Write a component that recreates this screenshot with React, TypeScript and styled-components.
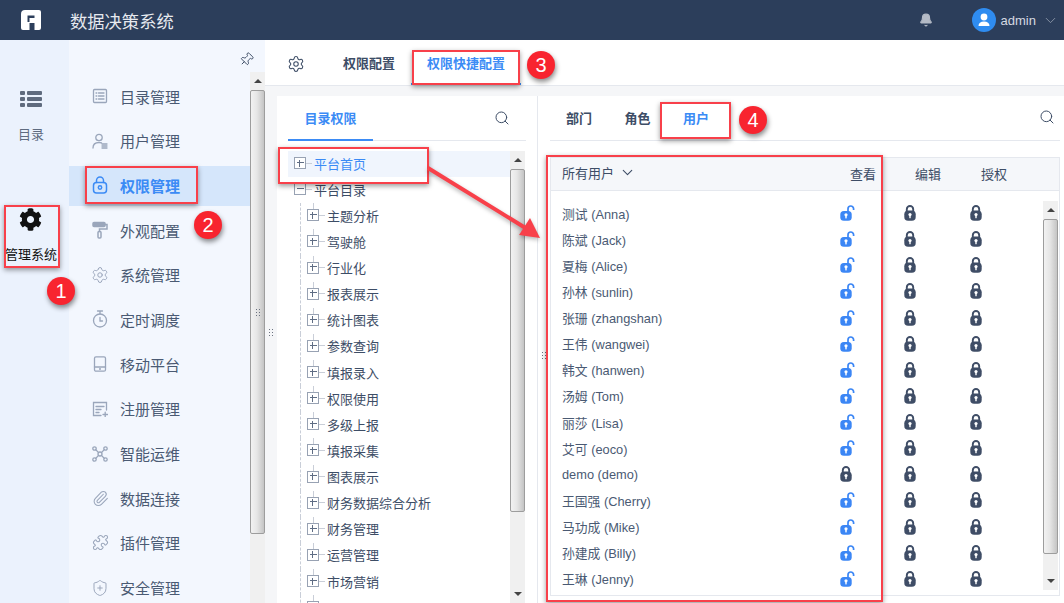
import styled, { createGlobalStyle } from 'styled-components';
import { Bell, ChevronDown, Paperclip, Pin, Puzzle, Search, Settings, ShieldPlus } from 'lucide-react';
import { FaCog } from 'react-icons/fa';
import type { ReactNode } from 'react';

const FONT = `"Liberation Sans", "Noto Sans CJK SC", sans-serif`;

const GlobalStyle = createGlobalStyle`
  html, body {
    margin: 0;
    padding: 0;
    height: 100%;
    overflow: hidden;
    background: #fff;
  }
  * {
    box-sizing: border-box;
  }
`;

const Page = styled.div`
  position: relative;
  width: 1064px;
  height: 603px;
  overflow: hidden;
  font-family: ${FONT};
  color: #3d4d66;
`;

/* ---------- top bar ---------- */

const Header = styled.header`
  height: 40px;
  display: flex;
  align-items: center;
  background: #2c3e5b;
  color: #e6e9ef;
`;

const LogoWrap = styled.div`
  width: 70px;
  padding-left: 21px;
  display: flex;
`;

const AppName = styled.div`
  flex: 1;
  font-size: 17.3px;
`;

const BellWrap = styled.div`
  display: flex;
  margin-right: 39px;
  color: #b4bac6;
`;

const Avatar = styled.div`
  width: 24px;
  height: 24px;
  border-radius: 50%;
  background: #2f8cf0;
  display: flex;
  align-items: center;
  justify-content: center;
  margin-right: 5px;
`;

const UserName = styled.span`
  font-size: 13px;
  color: #d5d9e1;
  margin-right: 6px;
`;

const UserMenu = styled.div`
  display: flex;
  align-items: center;
  padding-right: 5px;
  color: #8b96a8;
`;

/* ---------- shell ---------- */

const Body = styled.div`
  display: flex;
  height: 563px;
`;

const Rail = styled.nav`
  width: 69px;
  background: #ebf2fd;
  display: flex;
  flex-direction: column;
  align-items: center;
  padding: 50px 7px 0 0;
`;

const RailItem = styled.div<{ $active?: boolean }>`
  height: 118px;
  display: flex;
  flex-direction: column;
  align-items: center;
  gap: ${(p) => (p.$active ? '13px' : '16px')};
  font-size: 13px;
  white-space: nowrap;
  color: ${(p) => (p.$active ? '#111' : '#5e6b80')};
`;

const Nav = styled.nav`
  width: 196px;
  background: #f3f7fe;
  display: flex;
  flex-direction: column;
  flex-shrink: 0;
`;

const PinRow = styled.div`
  height: 32px;
  display: flex;
  justify-content: flex-end;
  align-items: center;
  padding: 6px 11px 0 0;
  color: #3d4d66;
`;

const NavBody = styled.div`
  flex: 1;
  display: flex;
  min-height: 0;
`;

const NavList = styled.div`
  width: 181px;
  padding-top: 5px;
  overflow: hidden;
`;

const NavRow = styled.div<{ $active?: boolean }>`
  height: 40px;
  margin-bottom: 4.7px;
  display: flex;
  align-items: center;
  gap: 12px;
  padding: 0 0 2px 23px;
  font-size: 15px;
  color: ${(p) => (p.$active ? '#3b8bf5' : '#4a5a73')};
  background: ${(p) => (p.$active ? '#d5e6fb' : 'transparent')};
  font-weight: ${(p) => (p.$active ? 700 : 400)};
`;

const NavIcon = styled.span<{ $active?: boolean }>`
  width: 16px;
  height: 18px;
  display: flex;
  align-items: center;
  justify-content: center;
  flex-shrink: 0;
  color: ${(p) => (p.$active ? '#3b8bf5' : '#9aa6bb')};
  svg {
    flex-shrink: 0;
  }
`;

const Track = styled.div`
  width: 15px;
  flex-shrink: 0;
  background: #f0f0f0;
  display: flex;
  flex-direction: column;
`;

const TrackArrow = styled.div<{ $down?: boolean }>`
  height: 18px;
  flex-shrink: 0;
  display: flex;
  align-items: center;
  justify-content: center;
  &::before {
    content: '';
    border-left: 4px solid transparent;
    border-right: 4px solid transparent;
    ${(p) =>
      p.$down ? 'border-top: 4px solid #444;' : 'border-bottom: 4px solid #444;'}
  }
`;

const Thumb = styled.div<{ $size: number }>`
  height: ${(p) => p.$size}px;
  flex-shrink: 0;
  background: linear-gradient(90deg, #f2f2f2 0%, #e6e6e6 45%, #c4c4c4 100%);
  border: 1px solid #9d9d9d;
  border-radius: 2px;
`;

const TrackSpacer = styled.div`
  flex: 1;
`;

const Main = styled.main`
  flex: 1;
  display: flex;
  flex-direction: column;
  min-width: 0;
`;

const TopTabs = styled.div`
  height: 46px;
  flex-shrink: 0;
  display: flex;
  align-items: center;
  padding: 2px 0 0 22px;
  border-bottom: 1px solid #e5e8ee;
`;

const TopTab = styled.div<{ $active?: boolean }>`
  height: 100%;
  display: flex;
  align-items: center;
  padding: 0 16px;
  margin-left: ${(p) => (p.$active ? '0' : '22px')};
  font-size: 13px;
  font-weight: 700;
  color: ${(p) => (p.$active ? '#3b8bf5' : '#3d4d66')};
  border-bottom: 2px solid ${(p) => (p.$active ? '#3b8bf5' : 'transparent')};
`;

const Workspace = styled.div`
  flex: 1;
  display: flex;
  background: #f5f6f8;
  padding: 10px 0 0 12px;
  min-height: 0;
`;

/* ---------- left tree ---------- */

const TreePanel = styled.section`
  width: 261px;
  background: #fff;
  border-right: 1px solid #e5e8ee;
  display: flex;
  flex-direction: column;
  padding: 0 11px;
  flex-shrink: 0;
`;

const PanelHead = styled.div`
  height: 45px;
  flex-shrink: 0;
  display: flex;
  align-items: center;
  justify-content: space-between;
  border-bottom: 1px solid #e5e8ee;
  padding-right: 16px;
  color: #3d4d66;
`;

const PanelTab = styled.div`
  width: 85px;
  height: 100%;
  display: flex;
  align-items: center;
  justify-content: center;
  font-size: 13px;
  font-weight: 700;
  color: #3b8bf5;
  border-bottom: 2px solid #3b8bf5;
  margin-bottom: -1px;
`;

const TreeBody = styled.div`
  flex: 1;
  display: flex;
  margin-top: 10px;
  min-height: 0;
`;

const TreeList = styled.div`
  width: 222px;
  overflow: hidden;
`;

const TreeRow = styled.div<{ $child?: boolean; $active?: boolean }>`
  position: relative;
  height: 26.14px;
  display: flex;
  align-items: center;
  padding: 0 0 2px ${(p) => (p.$child ? '19px' : '6px')};
  font-size: 13px;
  white-space: nowrap;
  color: ${(p) => (p.$active ? '#3b8bf5' : '#3d4d66')};
  background: ${(p) => (p.$active ? '#f0f5fd' : 'transparent')};
  ${(p) =>
    p.$child &&
    `&::before {
      content: '';
      position: absolute;
      left: 12px;
      top: 0;
      bottom: 0;
      border-left: 1px dashed #c9ced8;
    }
    &::after {
      content: '';
      position: absolute;
      left: 25px;
      top: 0;
      height: 6px;
      border-left: 1px dashed #c9ced8;
    }`}
`;

const Expander = styled.span`
  position: relative;
  width: 12px;
  height: 12px;
  flex-shrink: 0;
  border: 1.5px solid #98a2b3;
  background: #fff;
  &::before {
    content: '';
    position: absolute;
    left: 1.5px;
    right: 1.5px;
    top: 3.75px;
    height: 1px;
    background: #5f6d84;
  }
`;

const ExpanderPlus = styled(Expander)`
  &::after {
    content: '';
    position: absolute;
    top: 1.5px;
    bottom: 1.5px;
    left: 3.75px;
    width: 1px;
    background: #5f6d84;
  }
`;

const Stub = styled.span`
  width: 6px;
  margin-right: 2px;
  flex-shrink: 0;
  border-top: 1px dashed #c9ced8;
`;

/* ---------- right side ---------- */

const RightPanel = styled.section`
  flex: 1;
  background: #fff;
  padding: 0 4px 7px 12px;
  display: flex;
  flex-direction: column;
  min-width: 0;
`;

const SubTabs = styled.div`
  height: 45px;
  flex-shrink: 0;
  display: flex;
  align-items: center;
  border-bottom: 1px solid #e5e8ee;
  padding: 0 0 2px 16px;
  font-size: 13px;
  font-weight: 700;
  margin-bottom: 16px;
  color: #3d4d66;
`;

const SubTab = styled.div<{ $active?: boolean }>`
  margin-right: 32.5px;
  color: ${(p) => (p.$active ? '#3b8bf5' : '#3d4d66')};
`;

const SearchSlot = styled.div`
  margin-left: auto;
  margin-right: 5px;
  display: flex;
`;

const Table = styled.div`
  flex: 1;
  border: 1px solid #e5e8ee;
  display: flex;
  flex-direction: column;
  min-height: 0;
`;

const TableHead = styled.div`
  height: 33px;
  flex-shrink: 0;
  background: #f5f7fa;
  border-bottom: 1px solid #e5e8ee;
  display: grid;
  grid-template-columns: 288px 65px 66px 1fr;
  align-items: center;
  padding: 0 0 2px 11px;
  font-size: 13px;
  color: #3d4d66;
`;

const HeadName = styled.div`
  display: flex;
  align-items: center;
  gap: 5px;
  margin-top: -2px;
`;

const TableBody = styled.div`
  flex: 1;
  display: flex;
  padding-top: 9px;
  min-height: 0;
`;

const Rows = styled.div`
  flex: 1;
  overflow: hidden;
`;

const UserRow = styled.div`
  height: 26.14px;
  display: grid;
  grid-template-columns: 278px 64px 66px 12px;
  align-items: center;
  padding-left: 11px;
  font-size: 12.8px;
  color: #4a5a73;
`;

const LockCell = styled.span`
  display: flex;
`;

const UserTrack = styled(Track)`
  margin: 1px 1px 5px 0;
`;

/* ---------- annotations, lying over the page ---------- */

const Mark = styled.div<{ $x: number; $y: number; $w: number; $h: number }>`
  position: absolute;
  left: ${(p) => p.$x}px;
  top: ${(p) => p.$y}px;
  width: ${(p) => p.$w}px;
  height: ${(p) => p.$h}px;
  border: 2px solid #f8404a;
  box-shadow: 0 2px 5px rgba(0, 0, 0, 0.4);
  pointer-events: none;
`;

const Badge = styled.div<{ $x: number; $y: number }>`
  position: absolute;
  left: ${(p) => p.$x - 14}px;
  top: ${(p) => p.$y - 14}px;
  width: 28px;
  height: 28px;
  border-radius: 50%;
  background: #f8242f;
  color: #fff;
  font-size: 20px;
  display: flex;
  align-items: center;
  justify-content: center;
  box-shadow: 1px 3px 5px rgba(0, 0, 0, 0.45);
`;

const Arrow = styled.svg`
  position: absolute;
  left: 420px;
  top: 160px;
  filter: drop-shadow(0 2px 2px rgba(0, 0, 0, 0.3));
`;

const Grip = styled.div<{ $x: number; $y: number }>`
  position: absolute;
  left: ${(p) => p.$x}px;
  top: ${(p) => p.$y}px;
  width: 6px;
  height: 9px;
  background-image: radial-gradient(#6b7280 0.8px, transparent 0.9px);
  background-size: 3px 3px;
`;

/* ---------- drawn icons ---------- */

const Logo = () => (
  <svg width="20" height="20" viewBox="0 0 20 20" fill="#fff">
    <path
      fillRule="evenodd"
      d="M4 0H18a2 2 0 0 1 2 2V18a2 2 0 0 1-2 2H13.500V13H8.500V20H2a2 2 0 0 1-2-2V4a4 4 0 0 1 4-4ZM6.500 5.500V12H8.500V8H13.500V5.500Z"
    />
  </svg>
);

const RailList = () => (
  <svg width="22" height="18" viewBox="0 0 22 18" fill="#5f6b7e">
    <rect x="0" y="1" width="5" height="4" rx="1" />
    <rect x="7" y="1" width="15" height="4" rx="1" />
    <rect x="0" y="7" width="5" height="4" rx="1" />
    <rect x="7" y="7" width="15" height="4" rx="1" />
    <rect x="0" y="13" width="5" height="4" rx="1" />
    <rect x="7" y="13" width="15" height="4" rx="1" />
  </svg>
);

const stroke = {
  fill: 'none',
  stroke: 'currentColor',
  strokeWidth: 1.3,
  strokeLinecap: 'round' as const,
};

const DocList = () => (
  <svg width="16" height="16" viewBox="0 0 16 16" {...stroke}>
    <rect x="1.500" y="1.500" width="13" height="13" rx="1" />
    <path d="M4 5h.8M4 8h.8M4 11h.8M6.500 5H12M6.500 8H12M6.500 11H12" />
  </svg>
);

const UserLines = () => (
  <svg width="16" height="16" viewBox="0 0 16 16" {...stroke}>
    <circle cx="7" cy="4.500" r="3.200" />
    <path d="M1 15c0-3.500 2.500-5.500 6-5.500 1 0 1.800.1 2.500.4M10 11h5M10 13h5M10 15h5" />
  </svg>
);

const NavLock = () => (
  <svg width="16" height="18" viewBox="0 0 16 18" {...stroke} strokeWidth={1.5}>
    <rect x="1.500" y="6.500" width="13" height="10.500" rx="3" />
    <path d="M4.500 6.500V4.500a3.500 3.500 0 0 1 7 0V6.500" />
    <circle cx="8" cy="11.500" r="1.700" />
  </svg>
);

const Roller = () => (
  <svg width="16" height="18" viewBox="0 0 16 18" {...stroke} strokeWidth={1.5}>
    <rect x="1" y="1.500" width="12" height="4" rx="1" fill="currentColor" />
    <path d="M13 3.500h2v4.500H7.500v2.500" />
    <rect x="6" y="10.500" width="3" height="6.500" rx="1" />
  </svg>
);

const Stopwatch = () => (
  <svg width="16" height="18" viewBox="0 0 16 18" {...stroke}>
    <circle cx="8" cy="10.500" r="6.500" />
    <path d="M5.500 1h5M8 1v3M8 7.500v3.500h2.500" />
  </svg>
);

const Phone = () => (
  <svg width="16" height="16" viewBox="0 0 16 16" {...stroke}>
    <rect x="2.500" y="0.800" width="11" height="14.400" rx="1.500" />
    <path d="M2.500 11h11" />
    <circle cx="8" cy="13" r="0.400" />
  </svg>
);

const Register = () => (
  <svg width="16" height="16" viewBox="0 0 16 16" {...stroke}>
    <path d="M9 14.500H1.500v-13h13V9" />
    <path d="M4 5.500h8M4 8.500h5M4 11.500h3M11 13.500h4.500M13.200 11.200v4.500" />
  </svg>
);

const Ops = () => (
  <svg width="16" height="16" viewBox="0 0 16 16" {...stroke}>
    <circle cx="2.500" cy="2.500" r="1.700" />
    <circle cx="13.500" cy="2.500" r="1.700" />
    <circle cx="2.500" cy="13.500" r="1.700" />
    <circle cx="13.500" cy="13.500" r="1.700" />
    <circle cx="8" cy="8" r="2" />
    <path d="M3.800 3.800l2.800 2.800M12.200 3.800 9.400 6.600M3.800 12.200l2.800-2.800M12.200 12.200 9.400 9.400" />
  </svg>
);

const LockIcon = () => (
  <svg width="12" height="16" viewBox="0 0 12 16">
    <path d="M2.800 7V4.200a3.200 3.200 0 0 1 6.400 0V7" fill="none" stroke="#3f4d66" strokeWidth="1.900" />
    <rect x="0.300" y="5.500" width="11.400" height="10.300" rx="3.800" fill="#3f4d66" />
    <circle cx="6" cy="9.600" r="1.600" fill="#fff" />
    <rect x="5.300" y="10" width="1.400" height="3.200" fill="#fff" />
  </svg>
);

const OpenLockIcon = () => (
  <svg width="15" height="16" viewBox="0 0 15 16">
    <path d="M8 7V3.800a2.800 2.800 0 0 1 5.600 0V5" fill="none" stroke="#3b86f5" strokeWidth="1.700" />
    <rect x="0.300" y="6" width="11.400" height="9.800" rx="3.500" fill="#3b86f5" />
    <circle cx="6" cy="9.800" r="1.600" fill="#fff" />
    <rect x="5.300" y="10.200" width="1.400" height="3.200" fill="#fff" />
  </svg>
);

/* ---------- data ---------- */

const NAV_ITEMS: { label: string; icon: ReactNode; active?: boolean }[] = [
  { label: '目录管理', icon: <DocList /> },
  { label: '用户管理', icon: <UserLines /> },
  { label: '权限管理', icon: <NavLock />, active: true },
  { label: '外观配置', icon: <Roller /> },
  { label: '系统管理', icon: <Settings size={18} strokeWidth={1.3} /> },
  { label: '定时调度', icon: <Stopwatch /> },
  { label: '移动平台', icon: <Phone /> },
  { label: '注册管理', icon: <Register /> },
  { label: '智能运维', icon: <Ops /> },
  { label: '数据连接', icon: <Paperclip size={17} strokeWidth={1.5} /> },
  { label: '插件管理', icon: <Puzzle size={17} strokeWidth={1.5} /> },
  { label: '安全管理', icon: <ShieldPlus size={18} strokeWidth={1.3} /> },
];

const TREE_CHILDREN = [
  '主题分析',
  '驾驶舱',
  '行业化',
  '报表展示',
  '统计图表',
  '参数查询',
  '填报录入',
  '权限使用',
  '多级上报',
  '填报采集',
  '图表展示',
  '财务数据综合分析',
  '财务管理',
  '运营管理',
  '市场营销',
  '',
];

const USERS = [
  { name: '测试 (Anna)' },
  { name: '陈斌 (Jack)' },
  { name: '夏梅 (Alice)' },
  { name: '孙林 (sunlin)' },
  { name: '张珊 (zhangshan)' },
  { name: '王伟 (wangwei)' },
  { name: '韩文 (hanwen)' },
  { name: '汤姆 (Tom)' },
  { name: '丽莎 (Lisa)' },
  { name: '艾可 (eoco)' },
  { name: 'demo (demo)', locked: true },
  { name: '王国强 (Cherry)' },
  { name: '马功成 (Mike)' },
  { name: '孙建成 (Billy)' },
  { name: '王琳 (Jenny)' },
];

const App = () => (
  <Page>
    <GlobalStyle />
    <Header>
      <LogoWrap>
        <Logo />
      </LogoWrap>
      <AppName>数据决策系统</AppName>
      <BellWrap>
        <Bell size={14} fill="currentColor" />
      </BellWrap>
      <Avatar>
        <svg width="14" height="14" viewBox="0 0 14 14" fill="#fff">
          <circle cx="7" cy="4" r="3.400" />
          <path d="M1.500 13c0-3 2-4.500 5.500-4.500S12.500 10 12.500 13Z" />
        </svg>
      </Avatar>
      <UserName>admin</UserName>
      <UserMenu>
        <ChevronDown size={17} strokeWidth={1.3} />
      </UserMenu>
    </Header>
    <Body>
      <Rail>
        <RailItem>
          <RailList />
          目录
        </RailItem>
        <RailItem $active>
          <FaCog size={23} color="#111" />
          管理系统
        </RailItem>
      </Rail>
      <Nav>
        <PinRow>
          <Pin size={15} strokeWidth={1.5} style={{ transform: 'rotate(45deg)' }} />
        </PinRow>
        <NavBody>
          <NavList>
            {NAV_ITEMS.map((item) => (
              <NavRow key={item.label} $active={item.active}>
                <NavIcon $active={item.active}>{item.icon}</NavIcon>
                {item.label}
              </NavRow>
            ))}
          </NavList>
          <Track>
            <TrackArrow />
            <Thumb $size={444} />
            <TrackSpacer />
          </Track>
        </NavBody>
      </Nav>
      <Main>
        <TopTabs>
          <Settings size={18} strokeWidth={1.4} />
          <TopTab>权限配置</TopTab>
          <TopTab $active>权限快捷配置</TopTab>
        </TopTabs>
        <Workspace>
          <TreePanel>
            <PanelHead>
              <PanelTab>目录权限</PanelTab>
              <Search size={16} strokeWidth={1.5} />
            </PanelHead>
            <TreeBody>
              <TreeList>
                <TreeRow $active>
                  <ExpanderPlus />
                  <Stub />
                  平台首页
                </TreeRow>
                <TreeRow>
                  <Expander />
                  <Stub />
                  平台目录
                </TreeRow>
                {TREE_CHILDREN.map((label, i) => (
                  <TreeRow key={i} $child>
                    <ExpanderPlus />
                    <Stub />
                    {label}
                  </TreeRow>
                ))}
              </TreeList>
              <Track>
                <TrackArrow />
                <Thumb $size={343} />
                <TrackSpacer />
                <TrackArrow $down />
              </Track>
            </TreeBody>
          </TreePanel>
          <RightPanel>
            <SubTabs>
              <SubTab>部门</SubTab>
              <SubTab>角色</SubTab>
              <SubTab $active>用户</SubTab>
              <SearchSlot>
                <Search size={16} strokeWidth={1.5} />
              </SearchSlot>
            </SubTabs>
            <Table>
              <TableHead>
                <HeadName>
                  所有用户
                  <ChevronDown size={17} strokeWidth={1.5} />
                </HeadName>
                <span>查看</span>
                <span>编辑</span>
                <span>授权</span>
              </TableHead>
              <TableBody>
                <Rows>
                  {USERS.map((user) => (
                    <UserRow key={user.name}>
                      <span>{user.name}</span>
                      <LockCell>{user.locked ? <LockIcon /> : <OpenLockIcon />}</LockCell>
                      <LockCell>
                        <LockIcon />
                      </LockCell>
                      <LockCell>
                        <LockIcon />
                      </LockCell>
                    </UserRow>
                  ))}
                </Rows>
                <UserTrack>
                  <TrackArrow />
                  <Thumb $size={335} />
                  <TrackSpacer />
                  <TrackArrow $down />
                </UserTrack>
              </TableBody>
            </Table>
          </RightPanel>
        </Workspace>
      </Main>
    </Body>

    <Grip $x={255} $y={308} />
    <Grip $x={268} $y={328} />
    <Grip $x={541} $y={351} />

    <Mark $x={4} $y={205} $w={56} $h={63} />
    <Mark $x={85} $y={166} $w={113} $h={38} />
    <Mark $x={412} $y={50} $w={108} $h={35} />
    <Mark $x={278} $y={147} $w={151} $h={37} />
    <Mark $x={660} $y={102} $w={71} $h={37} />
    <Mark $x={546} $y={155} $w={337} $h={447} />

    <Arrow width="130" height="90" viewBox="0 0 130 90">
      <path d="M8 8 112 72" stroke="#f8404a" strokeWidth="4" fill="none" />
      <path d="M120 78 99 75 110 58Z" fill="#f8404a" />
    </Arrow>

    <Badge $x={61} $y={291}>1</Badge>
    <Badge $x={208} $y={225}>2</Badge>
    <Badge $x={541} $y={65}>3</Badge>
    <Badge $x={753} $y={120}>4</Badge>
  </Page>
);

export default App;
